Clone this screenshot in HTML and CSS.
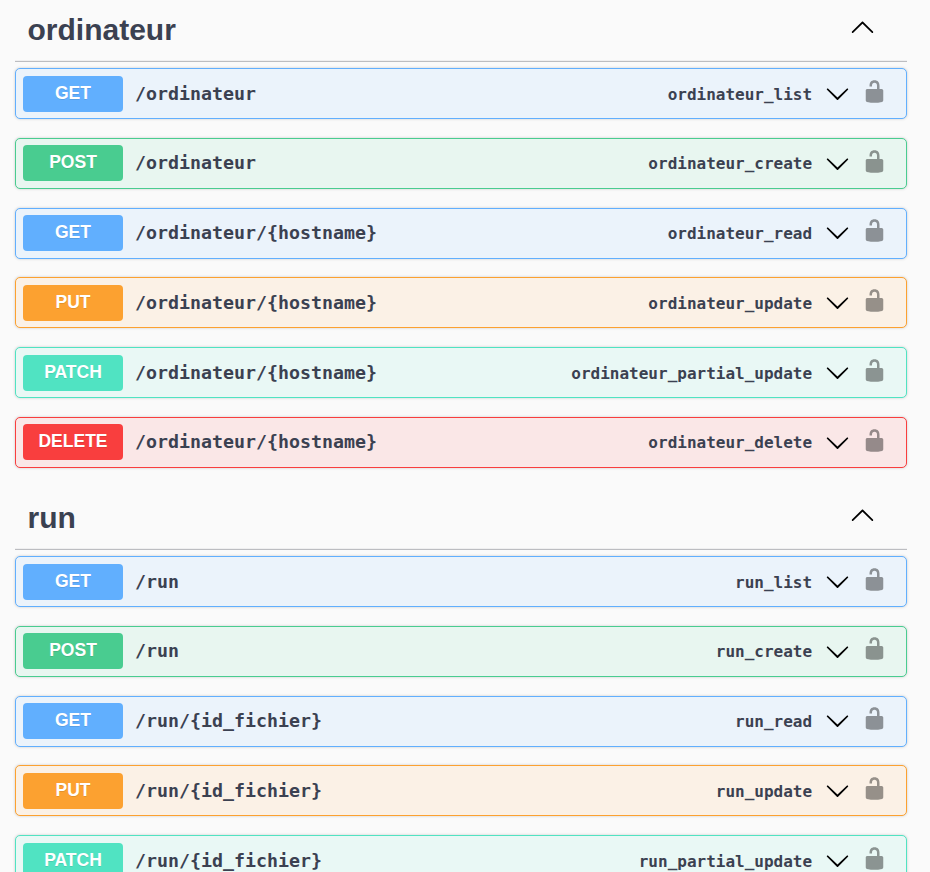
FILE: index.html
```html
<!DOCTYPE html>
<html lang="fr">
<head>
<meta charset="utf-8">
<title>API</title>
<link rel="stylesheet" href="styles.css">
</head>
<body>
<svg class="defs" aria-hidden="true">
  <symbol id="down" viewBox="0 0 20 20"><path d="M17.418 6.109c.272-.268.709-.268.979 0s.271.701 0 .969l-7.908 7.83c-.27.268-.707.268-.979 0l-7.908-7.83c-.27-.268-.27-.701 0-.969.271-.268.709-.268.979 0L10 13.25l7.418-7.141z"/></symbol>
  <symbol id="up" viewBox="0 0 20 20"><path d="M17.418 14.908c.272.268.709.268.979 0s.271-.701 0-.969l-7.908-7.83c-.27-.268-.707-.268-.979 0l-7.908 7.83c-.27.268-.27.701 0 .969.271.268.709.268.979 0L10 7.767l7.418 7.141z"/></symbol>
  <symbol id="unlocked" viewBox="0 0 20 20"><path d="M15.8 8H14V5.6C14 2.703 12.665 1 10 1 7.334 1 6 2.703 6 5.6V6h2v-.801C8 3.754 8.797 3 10 3c1.203 0 2 .754 2 2.199V8H4c-.553 0-1 .646-1 1.199V17c0 .549.428 1.139.951 1.307l1.197.387C5.672 18.861 6.55 19 7.1 19h5.8c.549 0 1.428-.139 1.951-.307l1.196-.387c.524-.167.953-.757.953-1.306V9.199C17 8.646 16.352 8 15.8 8z"/></symbol>
</svg>
<main class="api">
  <section class="tag">
    <h2 class="tag-head"><span>ordinateur</span><svg class="icon"><use href="#up"/></svg></h2>
    <div class="ops">
      <div class="op get"><span class="method">GET</span><span class="path">/ordinateur</span><span class="id">ordinateur_list</span><svg class="icon arrow"><use href="#down"/></svg><svg class="icon lock"><use href="#unlocked"/></svg></div>
      <div class="op post"><span class="method">POST</span><span class="path">/ordinateur</span><span class="id">ordinateur_create</span><svg class="icon arrow"><use href="#down"/></svg><svg class="icon lock"><use href="#unlocked"/></svg></div>
      <div class="op get"><span class="method">GET</span><span class="path">/ordinateur/{hostname}</span><span class="id">ordinateur_read</span><svg class="icon arrow"><use href="#down"/></svg><svg class="icon lock"><use href="#unlocked"/></svg></div>
      <div class="op put"><span class="method">PUT</span><span class="path">/ordinateur/{hostname}</span><span class="id">ordinateur_update</span><svg class="icon arrow"><use href="#down"/></svg><svg class="icon lock"><use href="#unlocked"/></svg></div>
      <div class="op patch"><span class="method">PATCH</span><span class="path">/ordinateur/{hostname}</span><span class="id">ordinateur_partial_update</span><svg class="icon arrow"><use href="#down"/></svg><svg class="icon lock"><use href="#unlocked"/></svg></div>
      <div class="op delete"><span class="method">DELETE</span><span class="path">/ordinateur/{hostname}</span><span class="id">ordinateur_delete</span><svg class="icon arrow"><use href="#down"/></svg><svg class="icon lock"><use href="#unlocked"/></svg></div>
    </div>
  </section>
  <section class="tag">
    <h2 class="tag-head"><span>run</span><svg class="icon"><use href="#up"/></svg></h2>
    <div class="ops">
      <div class="op get"><span class="method">GET</span><span class="path">/run</span><span class="id">run_list</span><svg class="icon arrow"><use href="#down"/></svg><svg class="icon lock"><use href="#unlocked"/></svg></div>
      <div class="op post"><span class="method">POST</span><span class="path">/run</span><span class="id">run_create</span><svg class="icon arrow"><use href="#down"/></svg><svg class="icon lock"><use href="#unlocked"/></svg></div>
      <div class="op get"><span class="method">GET</span><span class="path">/run/{id_fichier}</span><span class="id">run_read</span><svg class="icon arrow"><use href="#down"/></svg><svg class="icon lock"><use href="#unlocked"/></svg></div>
      <div class="op put"><span class="method">PUT</span><span class="path">/run/{id_fichier}</span><span class="id">run_update</span><svg class="icon arrow"><use href="#down"/></svg><svg class="icon lock"><use href="#unlocked"/></svg></div>
      <div class="op patch"><span class="method">PATCH</span><span class="path">/run/{id_fichier}</span><span class="id">run_partial_update</span><svg class="icon arrow"><use href="#down"/></svg><svg class="icon lock"><use href="#unlocked"/></svg></div>
    </div>
  </section>
</main>
</body>
</html>
```
FILE: styles.css
```css
* { box-sizing: border-box; }

body {
  margin: 0;
  height: 872px;
  overflow: hidden;
  background: #fafafa;
  color: #3b4151;
  font-family: "Liberation Sans", Arial, sans-serif;
}

.defs { display: none; }

.api { padding: 0 23px 0 15px; }

.tag { padding-bottom: 20.1px; }

.tag-head {
  display: flex;
  justify-content: space-between;
  height: 62px;
  margin: 0 0 6.05px;
  padding: 14px 32px 0 12.5px;
  border-bottom: 1px solid #bcbdc1;
  box-shadow: inset 0 -1px 0 #efeff0;
  font-size: 30px;
  line-height: 32px;
}

.ops {
  display: flex;
  flex-direction: column;
  gap: 18.77px;
}

.op {
  display: flex;
  align-items: flex-start;
  height: 51px;
  padding: 6.5px 19.3px 0 7px;
  border: 1px solid var(--c);
  border-radius: 5px;
  background: var(--bg);
  box-shadow: 0 0 3px rgba(0, 0, 0, .19);
}

.get { --c: #61affe; --bg: #ebf3fb; }
.post { --c: #49cc90; --bg: #e8f6f0; }
.put { --c: #fca130; --bg: #fbf1e6; }
.patch { --c: #50e3c2; --bg: #e9f8f5; }
.delete { --c: #f93e3e; --bg: #fae7e7; }

.method {
  width: 100px;
  height: 36px;
  border-radius: 4px;
  background: var(--c);
  color: #fff;
  font-size: 17.5px;
  font-weight: 700;
  line-height: 34.6px;
  text-align: center;
  text-shadow: 0 1px 0 rgba(0, 0, 0, .1);
}

.path,
.id {
  font-family: "DejaVu Sans Mono", monospace;
  font-weight: 700;
  line-height: 36.9px;
  white-space: nowrap;
}

.path { margin-left: 12px; font-size: 18.27px; }
.id { margin-left: auto; font-size: 16px; line-height: 37.4px; }

.icon {
  flex: none;
  width: 25px;
  height: 25px;
  fill: #000;
}

.arrow { margin: 5.3px 11.7px 0 12.9px; }
.lock { margin-top: 3.2px; opacity: .4; }
```
